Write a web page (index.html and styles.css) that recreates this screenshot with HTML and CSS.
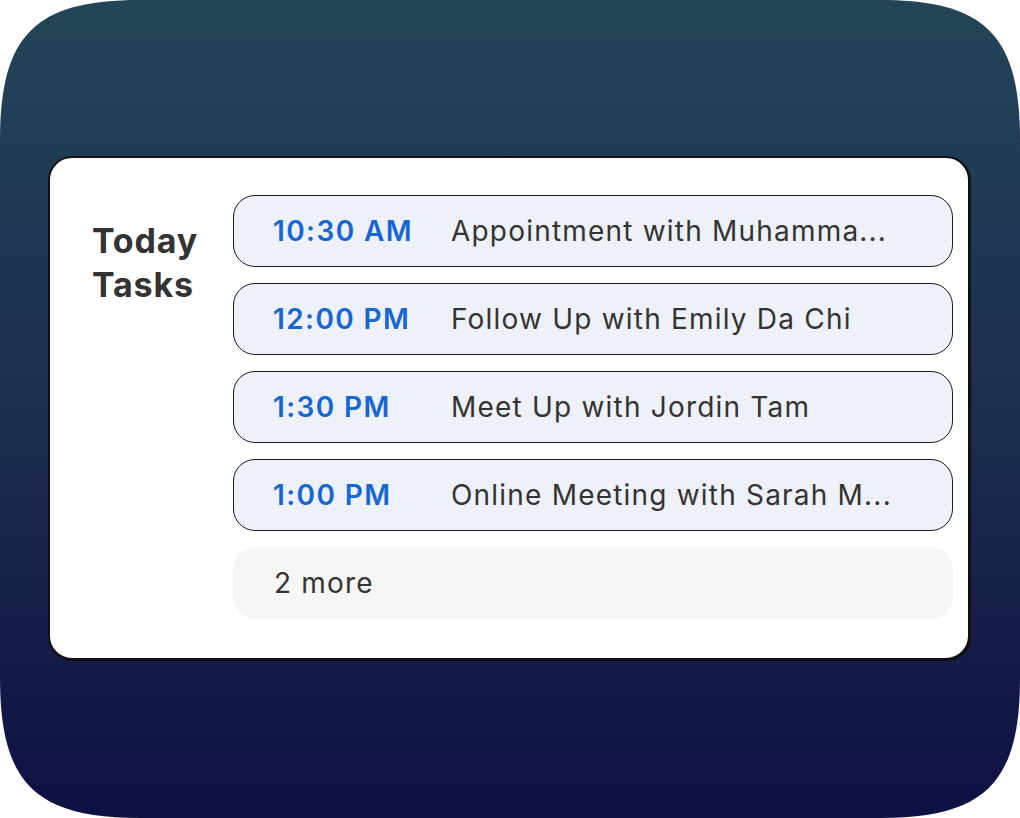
FILE: index.html
```html
<!DOCTYPE html>
<html>
<head>
<meta charset="utf-8">
<link rel="stylesheet" href="styles.css">
</head>
<body>
<div class="frame">
  <div class="card">
    <h2 class="heading">Today<br>Tasks</h2>
    <div class="list">
      <div class="task"><span class="time">10:30 AM</span><span class="title">Appointment with Muhamma...</span></div>
      <div class="task"><span class="time">12:00 PM</span><span class="title">Follow Up with Emily Da Chi</span></div>
      <div class="task"><span class="time">1:30 PM</span><span class="title">Meet Up with Jordin Tam</span></div>
      <div class="task"><span class="time">1:00 PM</span><span class="title">Online Meeting with Sarah M...</span></div>
      <div class="more">2 more</div>
    </div>
  </div>
</div>
</body>
</html>
```
FILE: styles.css
```css
html, body {
  margin: 0;
  padding: 0;
  background: #ffffff;
}
body {
  font-family: Inter, "Noto Sans", sans-serif;
}
.frame {
  width: 1020px;
  height: 818px;
  box-sizing: border-box;
  clip-path: path("M0,140 C0,35 35,0 140,0 L880,0 C985,0 1020,35 1020,140 L1020,678 C1020,783 985,818 880,818 L140,818 C35,818 0,783 0,678 Z");
  background: linear-gradient(180deg, #244558 0%, #1c2f4f 48%, #0f1043 100%);
  padding: 156px 50px 0 48px;
}
.card {
  box-sizing: border-box;
  width: 922px;
  height: 504px;
  background: #ffffff;
  border: 2px solid #111111;
  border-radius: 24px;
  box-shadow: 1px 1px 0 #111111;
  display: grid;
  grid-template-columns: 141px 1fr;
  padding: 37px 15px 0 42px;
}
.heading {
  margin: 24px 0 0 0;
  font-size: 34px;
  line-height: 44px;
  font-weight: 700;
  color: #333333;
  letter-spacing: 0.8px;
}
.list {
  display: flex;
  flex-direction: column;
  gap: 16px;
}
.task {
  box-sizing: border-box;
  height: 72px;
  border: 1.5px solid #1a1a1a;
  border-radius: 22px;
  background: #eef1fa;
  display: flex;
  align-items: center;
  padding-left: 39px;
  font-size: 28px;
}
.time {
  width: 178px;
  flex: none;
  color: #1767d2;
  font-weight: 600;
  letter-spacing: 1.4px;
}
.title {
  color: #333333;
  letter-spacing: 1.2px;
}
.more {
  box-sizing: border-box;
  height: 72px;
  border-radius: 22px;
  background: #f6f6f6;
  display: flex;
  align-items: center;
  padding-left: 41px;
  font-size: 28px;
  color: #333333;
  letter-spacing: 1.2px;
}
```
